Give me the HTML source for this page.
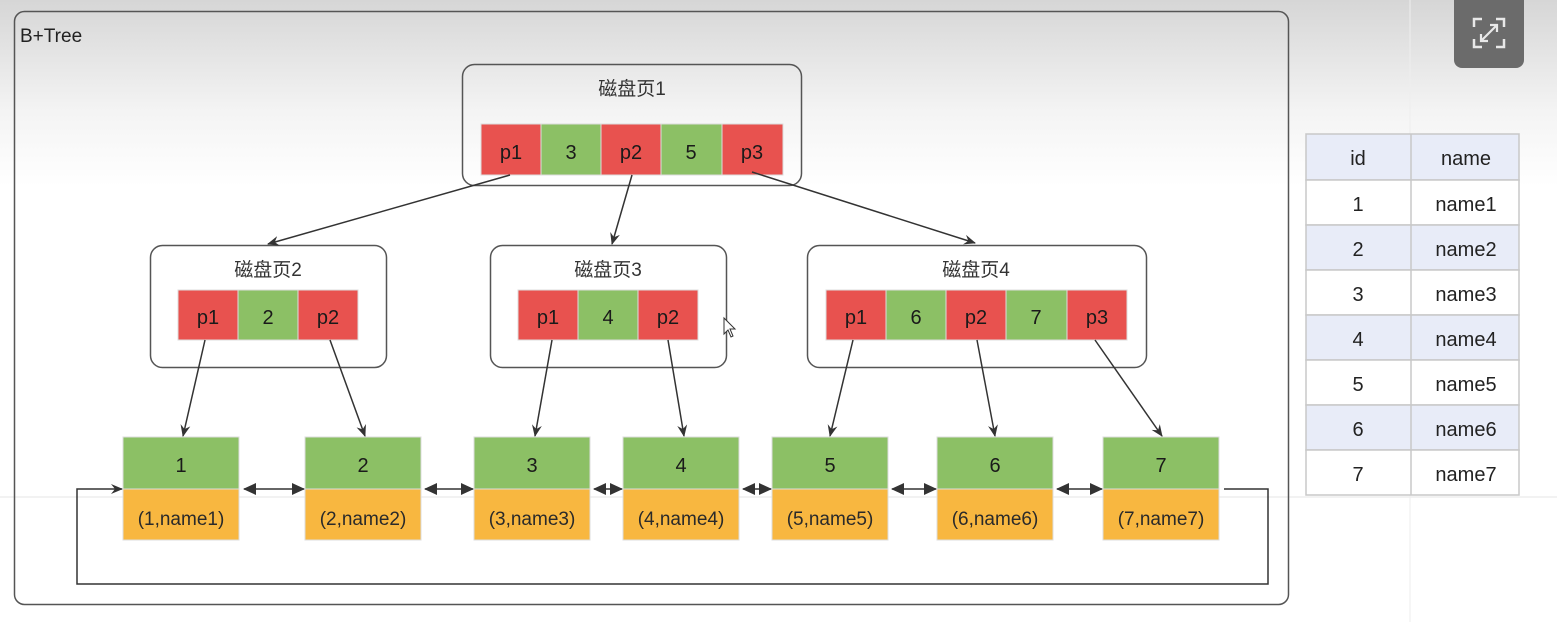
<!DOCTYPE html>
<html><head><meta charset="utf-8"><style>
html,body{margin:0;padding:0;width:1557px;height:622px;overflow:hidden;background:#fff}
svg{display:block;font-family:"Liberation Sans","Noto Sans CJK SC",sans-serif}
</style></head><body>
<svg width="1557" height="622" viewBox="0 0 1557 622" xmlns="http://www.w3.org/2000/svg">
<defs>
<linearGradient id="bg" x1="0" y1="0" x2="0" y2="1">
<stop offset="0" stop-color="#d6d6d6"/><stop offset="0.18" stop-color="#f4f4f4"/><stop offset="0.3" stop-color="#ffffff"/><stop offset="1" stop-color="#ffffff"/>
</linearGradient>
<marker id="ah" markerWidth="14" markerHeight="14" refX="11" refY="6" orient="auto" markerUnits="userSpaceOnUse"><path d="M0,1 L12,6 L0,11 L4,6 Z" fill="#333"/></marker>
<marker id="as" markerWidth="14" markerHeight="14" refX="12" refY="7" orient="auto-start-reverse" markerUnits="userSpaceOnUse"><path d="M0,1 L13,7 L0,13 Z" fill="#333"/></marker>
</defs>
<rect width="1557" height="622" fill="url(#bg)"/>
<line x1="0" y1="497" x2="1557" y2="497" stroke="#e6e6e6"/>
<line x1="1410" y1="0" x2="1410" y2="622" stroke="#eeeeee"/>
<rect x="14.5" y="11.5" width="1274" height="593" rx="10" fill="none" stroke="#555" stroke-width="1.5"/>
<text x="20" y="42" font-size="19" fill="#222">B+Tree</text>

<path d="M1454,0 H1524 V60 a8,8 0 0 1 -8,8 H1462 a8,8 0 0 1 -8,-8 Z" fill="#6b6b6b"/>
<g stroke="#e8e8e8" stroke-width="2.5" fill="none">
<path d="M1474,27 V19 H1482 M1496,19 H1504 V27 M1504,39 V47 H1496 M1482,47 H1474 V39"/>
<path d="M1481,41 L1497,25 M1490,25 H1497 V32 M1481,34 V41 H1488" stroke-width="2.2"/>
</g>

<g fill="none" stroke="#555" stroke-width="1.5">
<rect x="462.5" y="64.5" width="339" height="121" rx="12"/>
<rect x="150.5" y="245.5" width="236" height="122" rx="12"/>
<rect x="490.5" y="245.5" width="236" height="122" rx="12"/>
<rect x="807.5" y="245.5" width="339" height="122" rx="12"/>
</g>
<g font-size="19" fill="#333" text-anchor="middle">
<text x="632" y="95">磁盘页1</text>
<text x="268" y="276">磁盘页2</text>
<text x="608" y="276">磁盘页3</text>
<text x="976" y="276">磁盘页4</text>
</g>
<g stroke="#ddd" stroke-width="1">
<rect x="481" y="124" width="60" height="51" fill="#e8524f"/>
<rect x="541" y="124" width="60" height="51" fill="#8cc065"/>
<rect x="601" y="124" width="60" height="51" fill="#e8524f"/>
<rect x="661" y="124" width="61" height="51" fill="#8cc065"/>
<rect x="722" y="124" width="61" height="51" fill="#e8524f"/>
<rect x="178" y="290" width="60" height="50" fill="#e8524f"/>
<rect x="238" y="290" width="60" height="50" fill="#8cc065"/>
<rect x="298" y="290" width="60" height="50" fill="#e8524f"/>
<rect x="518" y="290" width="60" height="50" fill="#e8524f"/>
<rect x="578" y="290" width="60" height="50" fill="#8cc065"/>
<rect x="638" y="290" width="60" height="50" fill="#e8524f"/>
<rect x="826" y="290" width="60" height="50" fill="#e8524f"/>
<rect x="886" y="290" width="60" height="50" fill="#8cc065"/>
<rect x="946" y="290" width="60" height="50" fill="#e8524f"/>
<rect x="1006" y="290" width="61" height="50" fill="#8cc065"/>
<rect x="1067" y="290" width="60" height="50" fill="#e8524f"/>
</g>
<g font-size="20" fill="#1a1a1a" text-anchor="middle">
<text x="511" y="159">p1</text><text x="571" y="159">3</text><text x="631" y="159">p2</text><text x="691" y="159">5</text><text x="752" y="159">p3</text>
<text x="208" y="324">p1</text><text x="268" y="324">2</text><text x="328" y="324">p2</text>
<text x="548" y="324">p1</text><text x="608" y="324">4</text><text x="668" y="324">p2</text>
<text x="856" y="324">p1</text><text x="916" y="324">6</text><text x="976" y="324">p2</text><text x="1036" y="324">7</text><text x="1097" y="324">p3</text>
</g>

<g stroke="#ddd" stroke-width="1">
<rect x="123" y="437" width="116" height="52" fill="#8cc065"/><rect x="123" y="489" width="116" height="51" fill="#f8b740"/>
<rect x="305" y="437" width="116" height="52" fill="#8cc065"/><rect x="305" y="489" width="116" height="51" fill="#f8b740"/>
<rect x="474" y="437" width="116" height="52" fill="#8cc065"/><rect x="474" y="489" width="116" height="51" fill="#f8b740"/>
<rect x="623" y="437" width="116" height="52" fill="#8cc065"/><rect x="623" y="489" width="116" height="51" fill="#f8b740"/>
<rect x="772" y="437" width="116" height="52" fill="#8cc065"/><rect x="772" y="489" width="116" height="51" fill="#f8b740"/>
<rect x="937" y="437" width="116" height="52" fill="#8cc065"/><rect x="937" y="489" width="116" height="51" fill="#f8b740"/>
<rect x="1103" y="437" width="116" height="52" fill="#8cc065"/><rect x="1103" y="489" width="116" height="51" fill="#f8b740"/>
</g>
<g font-size="20" fill="#1a1a1a" text-anchor="middle">
<text x="181" y="472">1</text><text x="363" y="472">2</text><text x="532" y="472">3</text><text x="681" y="472">4</text><text x="830" y="472">5</text><text x="995" y="472">6</text><text x="1161" y="472">7</text>
</g>
<g font-size="19" fill="#2a2a2a" text-anchor="middle">
<text x="181" y="525">(1,name1)</text><text x="363" y="525">(2,name2)</text><text x="532" y="525">(3,name3)</text><text x="681" y="525">(4,name4)</text><text x="830" y="525">(5,name5)</text><text x="995" y="525">(6,name6)</text><text x="1161" y="525">(7,name7)</text>
</g>

<g stroke="#333" stroke-width="1.5" fill="none" marker-end="url(#ah)">
<line x1="510" y1="175" x2="268" y2="244"/>
<line x1="632" y1="175" x2="612" y2="244"/>
<line x1="752" y1="172" x2="975" y2="243"/>
<line x1="205" y1="340" x2="183" y2="436"/>
<line x1="330" y1="340" x2="365" y2="436"/>
<line x1="552" y1="340" x2="535" y2="436"/>
<line x1="668" y1="340" x2="684" y2="436"/>
<line x1="853" y1="340" x2="830" y2="436"/>
<line x1="977" y1="340" x2="995" y2="436"/>
<line x1="1095" y1="340" x2="1162" y2="436"/>
<path d="M1224,489 H1268 V584 H77 V489 H122"/>
</g>
<g stroke="#333" stroke-width="1.5" marker-start="url(#as)" marker-end="url(#as)">
<line x1="244" y1="489" x2="304" y2="489"/>
<line x1="425" y1="489" x2="473" y2="489"/>
<line x1="594" y1="489" x2="622" y2="489"/>
<line x1="743" y1="489" x2="771" y2="489"/>
<line x1="892" y1="489" x2="936" y2="489"/>
<line x1="1057" y1="489" x2="1102" y2="489"/>
</g>
<path d="M724,318 V334 L728,330 L731,337 L733,336 L730,329 L735,329 Z" fill="#fff" stroke="#333" stroke-width="1"/>

<g stroke="#c8c8c8" stroke-width="1.5">
<rect x="1306" y="134" width="213" height="46" fill="#e8ecf8"/>
<rect x="1306" y="180" width="213" height="45" fill="#fff"/>
<rect x="1306" y="225" width="213" height="45" fill="#e8ecf8"/>
<rect x="1306" y="270" width="213" height="45" fill="#fff"/>
<rect x="1306" y="315" width="213" height="45" fill="#e8ecf8"/>
<rect x="1306" y="360" width="213" height="45" fill="#fff"/>
<rect x="1306" y="405" width="213" height="45" fill="#e8ecf8"/>
<rect x="1306" y="450" width="213" height="45" fill="#fff"/>
<line x1="1411" y1="134" x2="1411" y2="495"/>
</g>
<g font-size="20" fill="#222" text-anchor="middle">
<text x="1358" y="165">id</text><text x="1466" y="165">name</text>
<text x="1358" y="211">1</text><text x="1466" y="211">name1</text>
<text x="1358" y="256">2</text><text x="1466" y="256">name2</text>
<text x="1358" y="301">3</text><text x="1466" y="301">name3</text>
<text x="1358" y="346">4</text><text x="1466" y="346">name4</text>
<text x="1358" y="391">5</text><text x="1466" y="391">name5</text>
<text x="1358" y="436">6</text><text x="1466" y="436">name6</text>
<text x="1358" y="481">7</text><text x="1466" y="481">name7</text>
</g>
</svg>
</body></html>
